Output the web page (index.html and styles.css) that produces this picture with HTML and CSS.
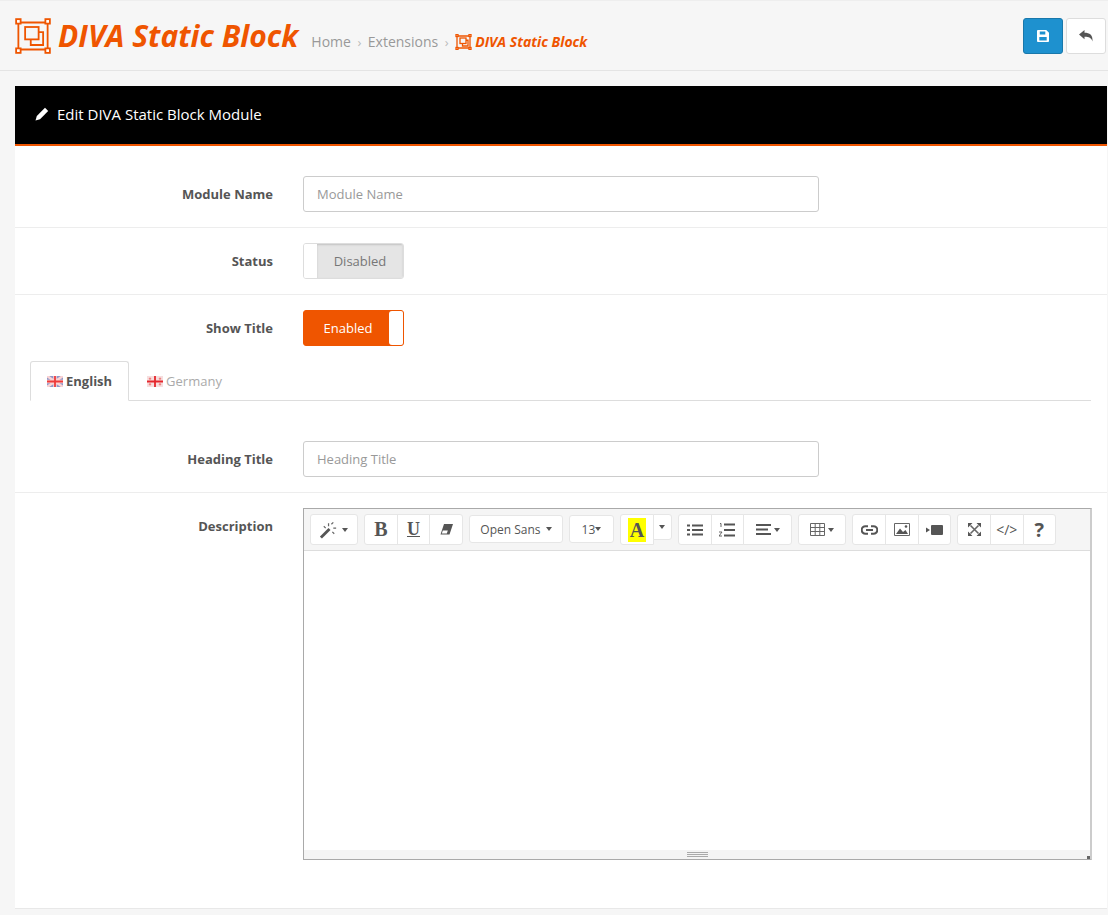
FILE: index.html
```html
<!DOCTYPE html>
<html lang="en">
<head>
  <meta charset="UTF-8" />
  <meta name="viewport" content="width=device-width, initial-scale=1.0"/>
  <title>DIVA Static Block</title>
  <link rel="stylesheet" href="styles.css">
</head>
<body>

  <svg class="sprite" width="0" height="0">
    <symbol id="blockIcon" viewBox="0 0 32 32">
      <g fill="none" stroke="currentColor">
        <path d="M3 4H29M3 28H29M3 4V28M29 4V28"/>
        <rect x="1" y="1" width="4" height="4" fill="#fff"/>
        <rect x="27" y="1" width="4" height="4" fill="#fff"/>
        <rect x="1" y="27" width="4" height="4" fill="#fff"/>
        <rect x="27" y="27" width="4" height="4" fill="#fff"/>
        <rect x="9" y="8" width="12" height="11"/>
        <path d="M21 12.500H25V24H14V19"/>
      </g>
    </symbol>
  </svg>

  <header class="page-header">
    <svg class="logo"><use href="#blockIcon"/></svg>
    <h1>DIVA Static Block</h1>
    <ul class="breadcrumb">
      <li>Home</li>
      <li class="sep">›</li>
      <li>Extensions</li>
      <li class="sep">›</li>
      <li class="current"><svg class="logo-small"><use href="#blockIcon"/></svg>DIVA Static Block</li>
    </ul>
    <div class="actions">
      <button class="btn btn-save" type="button">
        <svg width="12" height="12" viewBox="0 0 13 13"><path fill="#fff" fill-rule="evenodd" d="M1 0H10L13 3V12a1 1 0 0 1-1 1H1a1 1 0 0 1-1-1V1a1 1 0 0 1 1-1ZM3 1.500V5H9V1.500ZM2.500 7.500V11.500H10.500V7.500Z"/></svg>
      </button>
      <button class="btn btn-back" type="button">
        <svg width="14" height="12" viewBox="0 0 14 12"><path fill="#555" d="M0 4.500 5.500 0V2.700C10.500 2.700 14 4.500 13.500 11.500 12.500 8 10 6.700 5.500 6.700V9.300Z"/></svg>
      </button>
    </div>
  </header>

  <section class="panel">
    <div class="panel-heading">
      <svg width="14" height="14" viewBox="0 0 14 14"><path fill="#fff" d="M10 .8 13.200 4 5 12.200 .5 13.500 1.800 9Z"/></svg>
      Edit DIVA Static Block Module
    </div>

    <form class="panel-body">
      <div class="form-row first">
        <label>Module Name</label>
        <input type="text" placeholder="Module Name">
      </div>
      <div class="form-row">
        <label>Status</label>
        <div class="toggle off"><span class="knob"></span><span class="state">Disabled</span></div>
      </div>
      <div class="form-row plain">
        <label>Show Title</label>
        <div class="toggle on"><span class="state">Enabled</span><span class="knob"></span></div>
      </div>

      <ul class="tabs">
        <li class="active">
          <svg class="flag" viewBox="0 0 16 11"><rect width="16" height="11" fill="#8f97c9"/><path d="M0 0 16 11M16 0 0 11" stroke="#fbd3d3" stroke-width="2.500"/><path d="M8 0V11M0 5.500H16" stroke="#fbd3d3" stroke-width="3.500"/><path d="M8 0V11M0 5.500H16" stroke="#ee3b3b" stroke-width="1.800"/></svg>
          English
        </li>
        <li>
          <svg class="flag" viewBox="0 0 16 11"><rect width="16" height="11" fill="#f6dede"/><path d="M8 0V11M0 5.500H16" stroke="#e5262c" stroke-width="1.800"/><path d="M3 1.500V4M1.800 2.700H4.200M13 1.500V4M11.800 2.700H14.200M3 7V9.500M1.800 8.300H4.200M13 7V9.500M11.800 8.300H14.200" stroke="#ee6a6a" stroke-width=".8"/></svg>
          Germany
        </li>
      </ul>

      <div class="form-row heading-row">
        <label>Heading Title</label>
        <input type="text" placeholder="Heading Title">
      </div>

      <div class="form-row plain description-row">
        <label>Description</label>
        <div class="editor">
          <div class="toolbar">
            <div class="group">
              <button type="button" class="tool wide">
                <svg width="19" height="18" viewBox="0 0 20 18"><path d="M1 17 10 8" stroke="#555" stroke-width="3"/><path d="M9 2V5M14 7H17M12 3 14 1M4 5 6 7M13 11 15 13" stroke="#666" stroke-width="1.300"/></svg>
                <i class="caret"></i>
              </button>
            </div>
            <div class="group">
              <button type="button" class="tool serif-b">B</button>
              <button type="button" class="tool serif-u">U</button>
              <button type="button" class="tool">
                <svg width="13" height="11" viewBox="0 0 13 11"><path fill="#555" d="M4 0H13L9.500 10.500H0.500Z"/><path fill="#fff" d="M2.800 6.500H7.800L6.800 9.500H1.800Z"/></svg>
              </button>
            </div>
            <div class="group">
              <button type="button" class="tool font-name">Open Sans <i class="caret"></i></button>
            </div>
            <div class="group">
              <button type="button" class="tool font-size">13<i class="caret"></i></button>
            </div>
            <div class="group">
              <button type="button" class="tool color-a"><span>A</span></button>
              <button type="button" class="tool color-caret"><i class="caret"></i></button>
            </div>
            <div class="group">
              <button type="button" class="tool">
                <svg width="16" height="12" viewBox="0 0 16 12"><path d="M5 1.500H16M5 6H16M5 10.500H16M0 1.500H3M0 6H3M0 10.500H3" stroke="#555" stroke-width="2"/></svg>
              </button>
              <button type="button" class="tool">
                <svg width="16" height="14" viewBox="0 0 16 14"><path d="M5 1.500H16M5 7H16M5 12.500H16" stroke="#555" stroke-width="2"/><path d="M1 .5H2V4M0 9H3L0 13H3" fill="none" stroke="#555" stroke-width=".9"/></svg>
              </button>
              <button type="button" class="tool wider">
                <svg width="15" height="11" viewBox="0 0 15 11"><path d="M0 1H15M0 5.500H12M0 10H15" stroke="#555" stroke-width="2"/></svg>
                <i class="caret"></i>
              </button>
            </div>
            <div class="group">
              <button type="button" class="tool wide">
                <svg width="15" height="13" viewBox="0 0 15 13"><path d="M.5.500H14.500V12.500H.5ZM5.200.5V12.500M9.800.5V12.500M.5 4.500H14.500M.5 8.500H14.500" fill="none" stroke="#666"/></svg>
                <i class="caret"></i>
              </button>
            </div>
            <div class="group">
              <button type="button" class="tool">
                <svg width="17" height="10" viewBox="0 0 17 10"><path d="M7 1.200H4.500a3.800 3.800 0 0 0 0 7.600H7M10 1.200H12.500a3.800 3.800 0 0 1 0 7.600H10M5 5H12" fill="none" stroke="#555" stroke-width="2"/></svg>
              </button>
              <button type="button" class="tool">
                <svg width="16" height="13" viewBox="0 0 16 13"><path d="M.5.500H15.500V12.500H.5Z" fill="#fff" stroke="#666"/><path fill="#555" d="M2 11 6 5.500 9 9 11.500 7 14 11Z"/><circle cx="12" cy="3.500" r="1.300" fill="#555"/></svg>
              </button>
              <button type="button" class="tool">
                <svg width="17" height="10" viewBox="0 0 17 10"><rect x="5" width="12" height="10" rx="1" fill="#555"/><path fill="#555" d="M0 2.500 4 5 0 7.500Z"/></svg>
              </button>
            </div>
            <div class="group">
              <button type="button" class="tool">
                <svg width="13" height="13" viewBox="0 0 13 13"><path d="M2.500 2.500 10.500 10.500M10.500 2.500 2.500 10.500" stroke="#666" stroke-width="1.600"/><path fill="#555" d="M0 0H4.500L0 4.500ZM13 0V4.500L8.500 0ZM0 13V8.500L4.500 13ZM13 13H8.500L13 8.500Z"/></svg>
              </button>
              <button type="button" class="tool code">&lt;/&gt;</button>
              <button type="button" class="tool help">?</button>
            </div>
          </div>
          <div class="editable"></div>
          <div class="statusbar"><span class="grip"></span><span class="corner"></span></div>
        </div>
      </div>
    </form>
  </section>

</body>
</html>
```

FILE: styles.css
```css
* {
  box-sizing: border-box;
}

body {
  font-family: 'Open Sans', sans-serif;
  font-size: 13px;
  color: #555;
  background: #f6f6f6;
  margin: 0;
  padding: 0;
  height: 915px;
  overflow: hidden;
}

.sprite {
  position: absolute;
}

.page-header {
  display: flex;
  align-items: center;
  height: 71px;
  padding: 0 2px 0 15px;
  border-top: 1px solid #eee;
  border-bottom: 1px solid #e4e4e4;
}

.logo {
  width: 36px;
  height: 36px;
  color: #ef5500;
  margin-right: 7px;
  stroke-width: 1.6;
}

h1 {
  margin: 0 13px 0 0;
  font-size: 30px;
  font-style: italic;
  font-weight: 700;
  color: #ef5500;
  line-height: 36px;
}

.breadcrumb {
  display: flex;
  align-items: center;
  list-style: none;
  margin: 12px 0 0;
  padding: 0;
  font-size: 14px;
  color: #999;
}

.breadcrumb .sep {
  margin: 0 6.5px;
  color: #bbb;
  font-size: 13px;
}

.breadcrumb .current {
  display: flex;
  align-items: center;
  color: #ef5500;
  font-size: 14px;
  font-style: italic;
  font-weight: 700;
}

.logo-small {
  width: 17px;
  height: 16px;
  color: #ef5500;
  margin-right: 3px;
  stroke-width: 2.6;
}

.actions {
  display: flex;
  gap: 3px;
  margin-left: auto;
}

.btn {
  display: flex;
  align-items: center;
  justify-content: center;
  width: 40px;
  height: 36px;
  padding: 0;
  border-radius: 3px;
  border: 1px solid #ddd;
  background: #fff;
}

.btn-save {
  background: #1e91cf;
  border-color: #1978ab;
}

.panel {
  margin: 15px 1px 0 15px;
  height: 823px;
  background: #fff;
  border-bottom: 1px solid #e8e8e8;
}

.panel-heading {
  display: flex;
  align-items: center;
  gap: 8px;
  height: 60px;
  padding: 0 0 2px 20px;
  background: #000;
  border-bottom: 2px solid #ef5500;
  color: #fff;
  font-size: 15px;
}

.panel-body {
  padding: 0 16px 0 0;
}

.form-row {
  display: grid;
  grid-template-columns: 258px 789px;
  column-gap: 30px;
  padding: 15px 0 15px;
  border-bottom: 1px solid #ededed;
  margin-right: -16px;
  align-items: center;
}

.form-row.first {
  padding-top: 30px;
}

.form-row.plain {
  border-bottom: 0;
}

.form-row label {
  text-align: right;
  font-weight: 700;
  color: #555;
}

.form-row input {
  width: 516px;
  height: 36px;
  padding: 0 13px;
  border: 1px solid #ccc;
  border-radius: 3px;
  font-family: inherit;
  font-size: 13px;
  background: #fff;
}

.form-row input::placeholder {
  color: #999;
}

.toggle {
  display: flex;
  width: 101px;
  height: 36px;
  border-radius: 3px;
  font-size: 13px;
  overflow: hidden;
}

.toggle .state {
  flex: 1;
  display: flex;
  align-items: center;
  justify-content: center;
}

.toggle.off {
  border: 1px solid #ddd;
}

.toggle.off .knob {
  width: 13px;
  background: #fff;
}

.toggle.off .state {
  background: #e5e5e5;
  color: #777;
  box-shadow: inset 0 1px 2px rgba(0,0,0,0.15);
}

.toggle.on {
  border: 1px solid #ef5500;
  background: #ef5500;
}

.toggle.on .knob {
  width: 14px;
  background: #fff;
  border-radius: 3px 0 0 3px;
}

.toggle.on .state {
  color: #fff;
  padding-left: 3px;
}

.tabs {
  display: flex;
  gap: 2px;
  list-style: none;
  margin: 0 0 0 15px;
  padding: 0;
  height: 40px;
  border-bottom: 1px solid #ddd;
}

.tabs li {
  display: flex;
  align-items: center;
  gap: 3px;
  padding: 0 16px;
  height: 40px;
  color: #aaa;
}

.tabs li.active {
  color: #555;
  font-weight: 700;
  background: #fff;
  border: 1px solid #ddd;
  border-bottom-color: #fff;
  border-radius: 3px 3px 0 0;
}

.flag {
  width: 16px;
  height: 11px;
}

.heading-row {
  padding-top: 40px;
}

.description-row {
  align-items: start;
}

.description-row label {
  margin-top: 9px;
}

.editor {
  height: 352px;
  border: 1px solid #a9a9a9;
  border-right: 2px solid #ccc;
  display: flex;
  flex-direction: column;
}

.toolbar {
  display: flex;
  gap: 6px;
  height: 42px;
  padding: 5px 0 0 6px;
  background: #f5f5f5;
  border-bottom: 1px solid #ddd;
}

.group {
  display: flex;
  height: 31px;
}

.tool {
  display: flex;
  align-items: center;
  justify-content: center;
  gap: 3px;
  width: 33.67px;
  height: 31px;
  padding: 0;
  background: #fff;
  border: 1px solid #e6e6e6;
  margin-left: -1px;
  font-family: inherit;
  font-size: 12px;
  color: #555;
}

.group .tool:first-child {
  margin-left: 0;
  border-radius: 3px 0 0 3px;
}

.group .tool:last-child {
  border-radius: 0 3px 3px 0;
}

.group .tool:only-child {
  border-radius: 3px;
}

.tool.wide {
  width: 48px;
}

.tool.wider {
  width: 49px;
}

.caret {
  width: 0;
  height: 0;
  border-left: 3px solid transparent;
  border-right: 3px solid transparent;
  border-top: 4px solid #555;
}

.serif-b,
.serif-u {
  font-family: 'Liberation Serif', serif;
  font-weight: 700;
  font-size: 20px;
}

.serif-u {
  text-decoration: underline;
  font-size: 18px;
}

.font-name {
  width: 94px;
  margin-top: 1px;
  height: 28px;
  gap: 5px;
}

.font-size {
  width: 45px;
  margin-top: 1px;
  height: 28px;
  gap: 0;
}

.color-a {
  width: 34px;
}

.color-a span {
  background: #ff0;
  font-family: 'Liberation Serif', serif;
  font-weight: 700;
  font-size: 20px;
  line-height: 24px;
  padding: 0 2px;
  color: #555;
}

.color-caret {
  width: 19px;
  height: 26px;
}

.code {
  font-size: 14px;
}

.help {
  font-size: 20px;
  font-weight: 700;
}

.editable {
  flex: 1;
  background: #fff;
}

.statusbar {
  position: relative;
  display: flex;
  justify-content: center;
  align-items: center;
  height: 9px;
  background: #f4f4f4;
}

.grip {
  width: 21px;
  height: 5px;
  border-top: 1px solid #aaa;
  border-bottom: 1px solid #aaa;
  background: linear-gradient(#aaa, #aaa) center / 100% 1px no-repeat;
}

.corner {
  position: absolute;
  right: 0;
  bottom: 0;
  width: 3px;
  height: 3px;
  background: #666;
}
```
